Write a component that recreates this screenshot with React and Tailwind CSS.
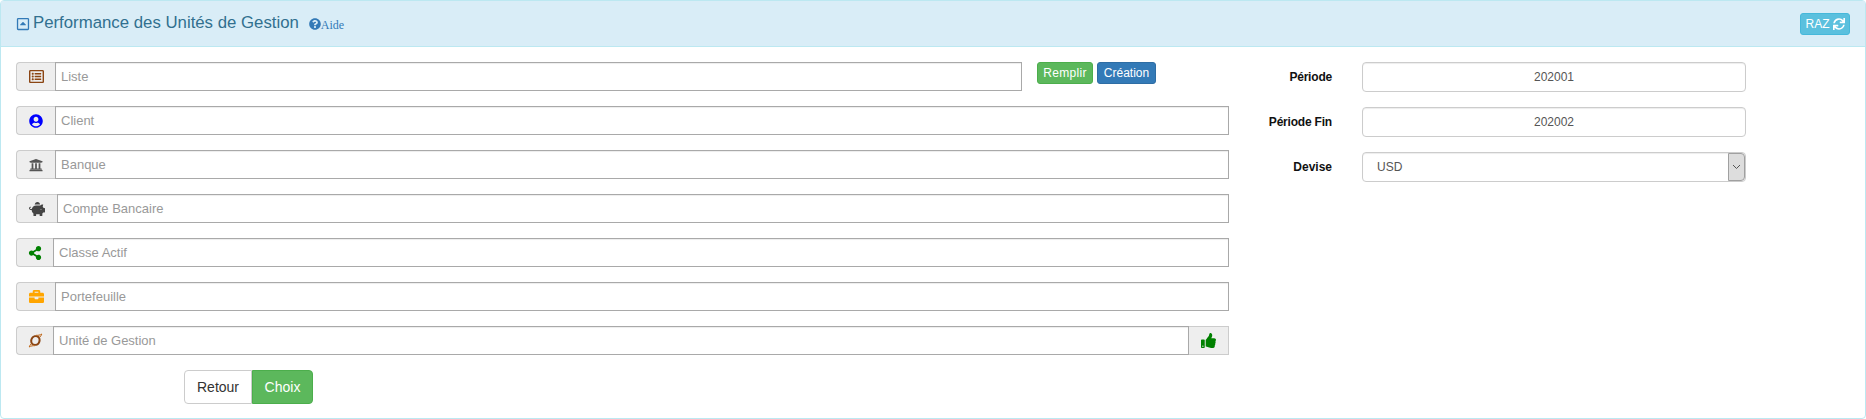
import React from "react";
import { FaRegListAlt, FaUserCircle, FaUniversity, FaPiggyBank, FaShareAlt, FaBriefcase, FaThumbsUp, FaSync, FaQuestionCircle, FaRegCaretSquareUp } from "react-icons/fa";

function Swirl() {
  return (
    <svg width="15" height="15" viewBox="0 0 15 15" fill="none">
      <path d="M7.8 2.2 C4.4 2.2 2.2 4.9 2.2 8.1 C2.2 10.9 4 12.8 7 12.8 C10.4 12.8 12.6 10.1 12.6 6.9 C12.6 4.1 10.8 2.2 7.8 2.2 Z M7.7 3.9 C9.6 3.9 10.6 5.2 10.6 7 C10.6 9.3 9.2 11.1 7.1 11.1 C5.2 11.1 4.2 9.8 4.2 8 C4.2 5.7 5.6 3.9 7.7 3.9 Z" fill="#8b4513" fillRule="evenodd" />
      <path d="M8 2.3 C10 2.4 12 2.2 13.8 1 C13.4 2.4 12.6 3.4 11.6 4.4 M7 12.7 C5 12.6 3 12.8 1.2 14 C1.6 12.6 2.4 11.6 3.4 10.6" stroke="#c0681a" strokeWidth="1" />
    </svg>
  );
}

function Row({ icon, addon, placeholder, w = "w-full", right }) {
  return (
    <div className={`flex h-[29px] ${w}`}>
      <div className={`${addon} shrink-0 flex items-center justify-center bg-[#eeeeee] border border-[#cccccc] border-r-0 rounded-l`}>{icon}</div>
      <input
        placeholder={placeholder}
        className="flex-1 min-w-0 h-full border border-[#a9a9a9] bg-white px-[5px] text-[13px] text-[#555] placeholder:text-[#999] shadow-[inset_0_1px_1px_rgba(0,0,0,0.075)] outline-none"
      />
      {right}
    </div>
  );
}

export default function App() {
  return (
    <div className="h-[419px] w-[1866px] overflow-hidden bg-white font-['Liberation_Sans',Arial,sans-serif]">
      <div className="h-full border border-[#bce8f1] rounded">
        <div className="h-[46px] bg-[#d9edf7] border-b border-[#bce8f1] flex items-center pl-[15px] pr-[15px] text-[#31708f]">
          <FaRegCaretSquareUp className="text-[#337ab7] text-[14px] mr-[3px]" />
          <span className="text-[16.8px] leading-none">Performance des Unités de Gestion</span>
          <span className="flex items-center ml-[10px] text-[#337ab7]">
            <FaQuestionCircle className="text-[12px]" />
            <span className="font-['Liberation_Serif',serif] text-[12px] mt-[2px]">Aide</span>
          </span>
          <button className="ml-auto flex items-center gap-[3px] h-[22px] w-[50px] justify-center rounded-[3px] bg-[#5bc0de] border border-[#46b8da] text-white text-[12px]">
            RAZ <FaSync className="text-[12px]" />
          </button>
        </div>
        <div className="flex pl-[15px] pt-[15px]">
          <div className="w-[1213px] flex flex-col gap-[15px]">
            <div className="flex items-start">
              <Row w="w-[1006px]" addon="w-[39px]" placeholder="Liste" icon={<FaRegListAlt className="text-[#8b4513] text-[15px]" />} />
              <button className="ml-[15px] h-[22px] w-[56px] rounded-[3px] bg-[#5cb85c] border border-[#4cae4c] text-white text-[12px] tracking-[0.3px]">Remplir</button>
              <button className="ml-[4px] h-[22px] w-[59px] rounded-[3px] bg-[#337ab7] border border-[#2e6da4] text-white text-[12px]">Création</button>
            </div>
            <Row addon="w-[39px]" placeholder="Client" icon={<FaUserCircle className="text-[#0000ff] text-[14px]" />} />
            <Row addon="w-[39px]" placeholder="Banque" icon={<FaUniversity className="text-[#555] text-[14px]" />} />
            <Row addon="w-[41px]" placeholder="Compte Bancaire" icon={<FaPiggyBank className="text-[#444] text-[16px]" />} />
            <Row addon="w-[37px]" placeholder="Classe Actif" icon={<FaShareAlt className="text-[#008000] text-[14px]" />} />
            <Row addon="w-[39px]" placeholder="Portefeuille" icon={<FaBriefcase className="text-[#ffa500] text-[15px]" />} />
            <Row addon="w-[37px]" placeholder="Unité de Gestion" icon={<Swirl />} right={
              <div className="w-[40px] shrink-0 flex items-center justify-center bg-[#eeeeee] border border-[#cccccc] border-l-0">
                <FaThumbsUp className="text-[#008000] text-[15px]" />
              </div>
            } />
            <div className="flex pl-[168px]">
              <button className="h-[34px] w-[68px] bg-white border border-[#cccccc] rounded-l text-[#333] text-[14px]">Retour</button>
              <button className="h-[34px] w-[61px] bg-[#5cb85c] border border-[#4cae4c] rounded-r text-white text-[14px]">Choix</button>
            </div>
          </div>
          <div className="flex flex-col gap-[15px] text-[12px]">
            {["Période", "Période Fin"].map((l, i) => (
              <div key={l} className="flex items-center h-[30px]">
                <label className="w-[103px] text-right font-bold text-[#111] tracking-[-0.2px]">{l}</label>
                <input readOnly value={i ? "202002" : "202001"} className="ml-[30px] w-[384px] h-[30px] border border-[#cccccc] rounded text-center text-[12px] text-[#555] shadow-[inset_0_1px_1px_rgba(0,0,0,0.075)] outline-none" />
              </div>
            ))}
            <div className="flex items-center h-[30px]">
              <label className="w-[103px] text-right font-bold text-[#111]">Devise</label>
              <div className="ml-[30px] w-[384px] h-[30px] flex border border-[#cccccc] rounded text-[12px] text-[#555] shadow-[inset_0_1px_1px_rgba(0,0,0,0.075)]">
                <span className="flex-1 flex items-center pl-[14px]">USD</span>
                <span className="w-[17px] flex items-center justify-center bg-[#dddddd] border border-[#a0a0a0] rounded-r">
                  <svg width="9" height="6" viewBox="0 0 9 6" fill="none" stroke="#555" strokeWidth="1"><path d="M1 1l3.5 3.5L8 1" /></svg>
                </span>
              </div>
            </div>
          </div>
        </div>
      </div>
    </div>
  );
}
